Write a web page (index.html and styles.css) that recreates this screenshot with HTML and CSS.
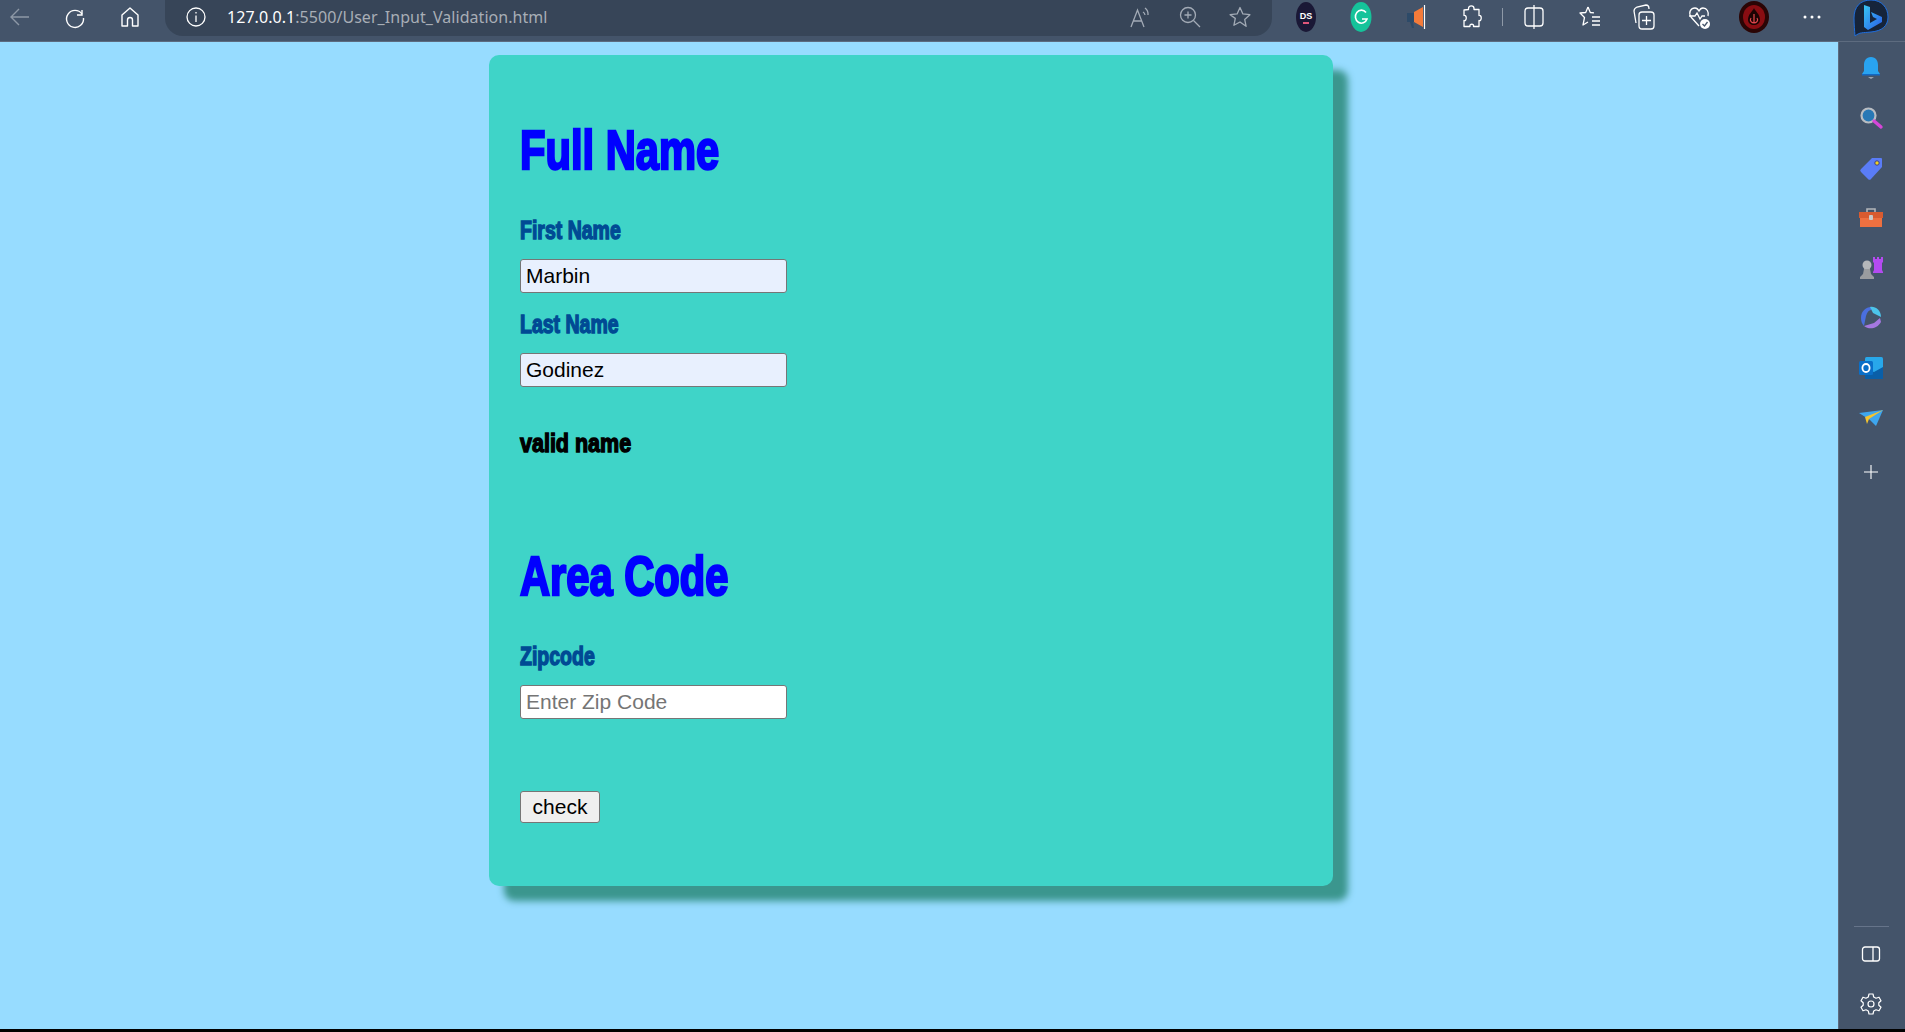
FILE: index.html
```html
<!DOCTYPE html>
<html lang="en">
<head>
<meta charset="utf-8">
<title>User Input Validation</title>
<link rel="stylesheet" href="styles.css">
</head>
<body>
<div class="browser">
  <header class="toolbar">
    <div class="nav">
      <span class="tb-icon"><svg width="24" height="24" viewBox="0 0 24 24" fill="none" stroke="#8d98a6" stroke-width="1.4"><path d="M21 12H3M11 4l-8 8 8 8"/></svg></span>
      <span class="tb-icon"><svg width="24" height="24" viewBox="0 0 24 24" fill="none" stroke="#fff" stroke-width="1.4"><path d="M19 5v5h-5"/><path d="M19 9a8.500 8.500 0 1 0 1.500 4"/></svg></span>
      <span class="tb-icon"><svg width="24" height="24" viewBox="0 0 24 24" fill="none" stroke="#fff" stroke-width="1.4"><path d="M4 21V10l8-7 8 7v11h-5.500v-6a2.500 2.500 0 0 0-5 0v6z" stroke-linejoin="round"/></svg></span>
    </div>
    <div class="address">
      <svg class="info" width="22" height="22" viewBox="0 0 22 22" fill="none" stroke="#fff" stroke-width="1.300"><circle cx="11" cy="11" r="9"/><path d="M11 9.500V16M11 6v1.600"/></svg>
      <span class="url"><span class="host">127.0.0.1</span>:5500/User_Input_Validation.html</span>
      <div class="addr-icons">
        <svg width="24" height="24" viewBox="0 0 24 24" fill="none" stroke="#a3abb6" stroke-width="1.300"><path d="M3 22L9.500 5 16 22M5.500 16h8"/><path d="M15 7a4 4 0 0 1 2 3M17 3a8 8 0 0 1 3 7"/></svg>
        <svg width="24" height="24" viewBox="0 0 24 24" fill="none" stroke="#a3abb6" stroke-width="1.300"><circle cx="10" cy="10" r="7.500"/><path d="M15.500 15.500L22 22M10 6.500v7M6.500 10h7"/></svg>
        <svg width="24" height="24" viewBox="0 0 24 24" fill="none" stroke="#a3abb6" stroke-width="1.300"><path d="M12 2.500l2.900 6.400 7 .8-5.200 4.700 1.400 6.900L12 17l-6.100 3.300 1.400-6.900L2.100 9.700l7-.8z" stroke-linejoin="round"/></svg>
      </div>
    </div>
    <div class="extensions">
      <span class="tb-icon"><svg width="24" height="30" viewBox="0 0 24 30"><ellipse cx="12" cy="15" rx="10" ry="15" fill="#1a1836"/><text x="12" y="17" class="ds-text" text-anchor="middle">DS</text><rect x="9" y="20" width="6" height="2" fill="#e0557a"/></svg></span>
      <span class="tb-icon"><svg width="24" height="30" viewBox="0 0 24 30"><ellipse cx="12" cy="15" rx="10.500" ry="15" fill="#15c39a"/><path d="M17 10.500a6 6.500 0 1 0 1 6.500h-5" fill="none" stroke="#fff" stroke-width="1.600"/></svg></span>
      <span class="tb-icon"><svg width="24" height="30" viewBox="0 0 24 30"><path d="M3 11h7v9H3z" fill="#2d4a68"/><path d="M6 20l2 6h2l-1-6z" fill="#2d4a68"/><path d="M10 10l9-5v20l-9-5z" fill="#f47b3a"/><path d="M20.500 3v24" stroke="#fff" stroke-width="1.200"/></svg></span>
      <span class="tb-icon"><svg width="24" height="30" viewBox="0 0 24 30" fill="none" stroke="#fff" stroke-width="1.300"><path d="M9.500 6.500c0-3.500 5.500-3.500 5.500 0v1h5v6c3-1 3 6 0 5v6h-5.500c1-3-4.500-3-3.500 0H5v-6c3 1 3-6 0-5V8l4.500-.5z" stroke-linejoin="round"/></svg></span>
      <span class="tb-sep"></span>
      <span class="tb-icon"><svg width="24" height="30" viewBox="0 0 24 30" fill="none" stroke="#fff" stroke-width="1.300"><rect x="3" y="6" width="18" height="18" rx="3"/><path d="M12 3v24"/></svg></span>
      <span class="tb-icon"><svg width="24" height="30" viewBox="0 0 24 30" fill="none" stroke="#fff" stroke-width="1.300"><path d="M11 5l2.300 5.500 3.700.3M11 5L8.700 10.500 3 11l4.500 4.500L6 23l5-3" stroke-linejoin="round"/><path d="M15 15h8M15 19h8M15 23h8"/></svg></span>
      <span class="tb-icon"><svg width="24" height="30" viewBox="0 0 24 30" fill="none" stroke="#fff" stroke-width="1.300"><rect x="7" y="10" width="15" height="17" rx="3"/><path d="M4 21L2 9c0-2 1-3 3-4l9-2c2 0 3 2 3 4M14.500 14v9M10 18.500h9"/></svg></span>
      <span class="tb-icon"><svg width="24" height="30" viewBox="0 0 24 30" fill="none" stroke="#fff" stroke-width="1.300"><path d="M12 24L4 15c-3-5 0-9 4-9 2 0 3 1 4 3 1-2 2-3 4-3 4 0 6 4 5 8"/><path d="M2 14h6l2-3 3 6 2-3h3"/><circle cx="18" cy="22" r="5" fill="#fff" stroke="none"/><path d="M15.500 22l2 2 3-4" stroke="#44546a"/></svg></span>
      <span class="tb-icon"><svg width="30" height="32" viewBox="0 0 30 32"><ellipse cx="15" cy="16" rx="15" ry="16" fill="#2a0505"/><ellipse cx="15" cy="16" rx="11" ry="12" fill="#8a0d12"/><path d="M15 7c-1 3-6 6-6 12 0 3 3 5 6 5s6-2 6-5c0-6-5-9-6-12z" fill="#1b0303"/><path d="M15 13v9M12 17c-2 3 1 5 3 5s5-2 3-5" fill="none" stroke="#e5484d" stroke-width="1.200"/></svg></span>
      <span class="tb-icon dots"><svg width="24" height="24" viewBox="0 0 24 24" fill="#fff"><circle cx="5" cy="12" r="1.500"/><circle cx="12" cy="12" r="1.500"/><circle cx="19" cy="12" r="1.500"/></svg></span>
    </div>
    <span class="bing"><svg width="38" height="38" viewBox="0 0 38 38"><defs><linearGradient id="bingFill" x1="0" y1="0" x2="1" y2="1"><stop offset="0" stop-color="#37c6f4"/><stop offset="1" stop-color="#2a5ce8"/></linearGradient></defs><path d="M19 0C8 0 2 7 2 18c0 7 .6 12 1 18 5-4 7-3 16-4 11-1 17-6 17-15S30 0 19 0z" fill="#16243a" stroke="#1f6fe0" stroke-width="1"/><path d="M12 5l6 2v16l7-4-4-2-2-5 11 5v5l-14 8-4-3z" fill="url(#bingFill)"/></svg></span>
  </header>

  <div class="workspace">
    <main class="page">
      <form class="card">
        <h1 class="heading"><span class="impact">Full Name</span></h1>
        <label class="field-label"><span class="impact">First Name</span></label>
        <input class="text-input filled" type="text" value="Marbin">
        <label class="field-label second"><span class="impact">Last Name</span></label>
        <input class="text-input filled" type="text" value="Godinez">
        <p class="message"><span class="impact">valid name</span></p>
        <h1 class="heading area"><span class="impact">Area Code</span></h1>
        <label class="field-label zip"><span class="impact">Zipcode</span></label>
        <input class="text-input" type="text" placeholder="Enter Zip Code">
        <button class="check" type="button">check</button>
      </form>
    </main>

    <aside class="sidebar">
      <svg width="26" height="26" viewBox="0 0 26 26"><path d="M13 2c-5 0-7 4-7 8v6l-2 3h18l-2-3v-6c0-4-2-8-7-8z" fill="#29a3f0"/><path d="M4 19h18v1.500H4z" fill="#1268c4"/><path d="M10 22h6l-3 2z" fill="#9aa5b1"/></svg>
      <svg width="26" height="26" viewBox="0 0 26 26"><circle cx="10.500" cy="10.500" r="7" fill="#2878b5" stroke="#b9bdc2" stroke-width="2.200"/><path d="M16 16l7 6" stroke="#d546d8" stroke-width="3.400" stroke-linecap="round"/></svg>
      <svg width="26" height="26" viewBox="0 0 26 26"><path d="M14 3h9a1 1 0 0 1 1 1v8L13 24a2 2 0 0 1-3 0L3 17a2 2 0 0 1 0-3z" fill="#5a7cf7"/><circle cx="19" cy="8" r="2.200" fill="#f2d21f" stroke="#3b3f8f"/></svg>
      <svg width="26" height="26" viewBox="0 0 26 26"><path d="M9 7V4h8v3" fill="none" stroke="#b2b5b9" stroke-width="1.600"/><rect x="1" y="7" width="24" height="6" fill="#d85b30"/><rect x="2" y="13" width="22" height="9" fill="#ee7040"/><rect x="11" y="10" width="4" height="5" rx="1" fill="#c9c9c9"/></svg>
      <svg width="26" height="26" viewBox="0 0 26 26"><path d="M15 2h2v2h2V2h2v2h2V2h2v5l-1 1v7l1 2v1H15v-1l1-2V8l-1-1z" fill="#b44bf0"/><circle cx="9" cy="10" r="4.500" fill="#b5b7ba"/><path d="M6 14h6l1 5 3 3v2H2v-2l3-3z" fill="#9a9c9f"/></svg>
      <svg width="26" height="26" viewBox="0 0 26 26"><path d="M13 2C8 2 3 6 3 13c0 3 1 6 3 8l2-10c1-4 3-6 5-6z" fill="#4a6fe0"/><path d="M12 2c5-1 11 3 11 10l-8-4z" fill="#4cc4ea"/><path d="M6 21c5 4 13 3 17-4l-1-4-6 5z" fill="#a578e0"/><path d="M9 12l5-3 4 3-1 4-4 2-4-2z" fill="#44546a"/></svg>
      <svg width="26" height="26" viewBox="0 0 26 26"><rect x="7" y="2" width="18" height="22" rx="1.500" fill="#28a8ea"/><path d="M7 14l9 3 9-5v12H7z" fill="#0a5fa8"/><rect x="1" y="6" width="14" height="14" rx="1.500" fill="#0a6fc8"/><ellipse cx="8" cy="13" rx="3.600" ry="4" fill="none" stroke="#fff" stroke-width="1.800"/></svg>
      <svg width="26" height="26" viewBox="0 0 26 26"><path d="M1 8l24-3-7 16-6-6z" fill="#3ea6ee"/><path d="M25 5L7 12l2 7 2-5z" fill="#f4c430"/></svg>
      <svg class="add" width="18" height="18" viewBox="0 0 18 18" stroke="#fff" stroke-width="1.100"><path d="M9 2v14M2 9h14"/></svg>
      <div class="side-bottom">
        <span class="side-line"></span>
        <svg width="20" height="18" viewBox="0 0 20 18" fill="none" stroke="#fff" stroke-width="1.300"><rect x="1.500" y="2" width="17" height="14" rx="2.500"/><path d="M12 2v14"/></svg>
        <svg class="gear" width="24" height="24" viewBox="0 0 24 24" fill="none" stroke="#fff" stroke-width="1.200"><circle cx="12" cy="12" r="3"/><path d="M10 2h4l.7 3 2.300 1.200 3-1 2 3.500-2.200 2.100v2.400l2.200 2.100-2 3.500-3-1-2.300 1.200-.7 3h-4l-.7-3L7 17.800l-3 1-2-3.500 2.200-2.100v-2.400L2 8.700l2-3.500 3 1 2.300-1.200z" stroke-linejoin="round"/></svg>
      </div>
    </aside>
  </div>
</div>
</body>
</html>
```

FILE: styles.css
```css
* { box-sizing: border-box; }
html, body { margin: 0; height: 100%; overflow: hidden; }
body { background: #000; font-family: "Liberation Sans", Arial, sans-serif; }

.browser { height: 1029px; display: flex; flex-direction: column; }

.toolbar {
  height: 42px; flex: none; display: flex; align-items: flex-start;
  background: #44546a; border-bottom: 1px solid #5d6b7f; position: relative;
}
.tb-icon { width: 32px; height: 34px; display: flex; align-items: center; justify-content: center; flex: none; }
.nav { display: flex; gap: 23px; padding-left: 4px; width: 165px; }
.address {
  width: 1107px; height: 36px; flex: none; display: flex; align-items: center;
  background: #374558; border-radius: 0 0 18px 18px;
  padding: 0 0 2px 21px;
}
.info { flex: none; margin-left: -1px; }
.url {
  margin-left: 20px; font: 16px/20px "Noto Sans", sans-serif; color: #a8aeb6;
  letter-spacing: 0.05px; white-space: nowrap; flex: 1;
}
.host { color: #fff; }
.addr-icons { display: flex; gap: 26px; padding-right: 20px; }
.extensions { display: flex; gap: 23px; margin-left: 18px; align-items: center; height: 34px; }
.extensions .tb-sep { width: 1px; height: 18px; background: #8e99a7; margin: 0 -8px; flex: none; }
.extensions .dots { margin-left: 3px; }
.ds-text { font: 700 9px "Liberation Sans", sans-serif; fill: #fff; }
.bing { position: absolute; left: 1852px; top: 0; z-index: 2; line-height: 0; }

.workspace { flex: 1; display: flex; min-height: 0; }
.page { flex: 1; background: #97dcff; padding: 13px 0 0 489px; min-width: 0; }

.card {
  width: 844px; height: 831px; padding: 67px 31px 0; background: #3fd4c8;
  border-radius: 10px; box-shadow: 15px 15px 7px #3b968e;
}
.impact {
  display: inline-block; transform-origin: left center; font-weight: 700;
  -webkit-text-stroke: 1.400px currentColor; white-space: nowrap;
}
.heading { margin: 0; font-size: 56px; line-height: 56px; color: #0000ff; font-weight: 700; }
.heading .impact { transform: scaleX(0.744); -webkit-text-stroke-width: 2.600px; }
.heading.area { margin-top: 92px; }
.field-label { display: block; margin: 40px 0 16px; font-size: 25px; line-height: 25px; color: #004a94; }
.field-label .impact { transform: scaleX(0.78); }
.field-label.second { margin-top: 19px; }
.field-label.zip { margin-top: 40px; margin-bottom: 16px; }
.text-input {
  display: block; width: 267px; height: 34px; padding: 0 5px; font: 21px "Liberation Sans", Arial, sans-serif;
  color: #000; background: #fff; border: 1px solid #767676; border-radius: 3px; outline: none;
}
.text-input.filled { background: #e8f0fe; }
.text-input::placeholder { color: #757575; opacity: 1; }
.message { margin: 44px 0 0; font-size: 25px; line-height: 25px; color: #000; }
.message .impact { transform: scaleX(0.86); }
.check {
  display: block; width: 80px; height: 32px; margin-top: 72px; padding: 0; font: 21px "Liberation Sans", Arial, sans-serif;
  color: #000; background: #efefef; border: 1px solid #767676; border-radius: 3px;
}

.sidebar {
  width: 67px; flex: none; background: #44546a; border-left: 1px solid #5d6b7f;
  display: flex; flex-direction: column; align-items: center; gap: 24px; padding: 13px 2px 0 0;
}
.sidebar .add { margin-top: 8px; }
.side-bottom { margin-top: auto; display: flex; flex-direction: column; align-items: center; padding-bottom: 13px; }
.side-line { width: 35px; height: 1px; background: #66748a; margin-bottom: 18px; }
.gear { margin-top: 29px; }
```
